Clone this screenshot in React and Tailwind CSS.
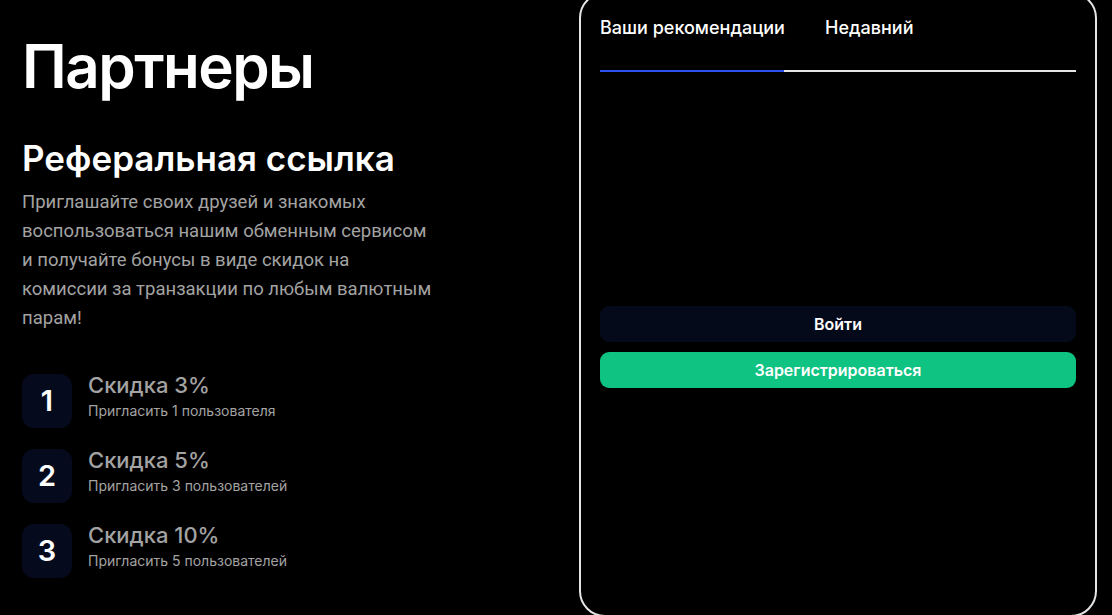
import React from "react";

const tiers = [
  { n: "1", title: "Скидка 3%", sub: "Пригласить 1 пользователя" },
  { n: "2", title: "Скидка 5%", sub: "Пригласить 3 пользователей" },
  { n: "3", title: "Скидка 10%", sub: "Пригласить 5 пользователей" },
];

const App = () => {
  return (
    <div className="min-h-screen h-[615px] overflow-hidden bg-black text-white flex font-['Inter',sans-serif]">
      <div className="w-[579px] shrink-0 pl-[22px] pt-[30px]">
        <h1 className="text-[60px] leading-[72px] font-semibold tracking-[-1.5px]">Партнеры</h1>
        <h2 className="mt-[36px] text-[35px] leading-[40px] font-semibold">Реферальная ссылка</h2>
        <p className="mt-[10px] w-[414px] text-[18.5px] leading-[29px] text-[#a3a3a3] font-['Roboto',sans-serif]">
          Приглашайте своих друзей и знакомых воспользоваться нашим обменным сервисом и получайте бонусы в виде скидок на
          комиссии за транзакции по любым валютным парам!
        </p>
        <div className="mt-[41px] flex flex-col gap-[21px]">
          {tiers.map((t) => (
            <div key={t.n} className="flex items-start gap-[16px]">
              <div className="w-[50px] h-[54px] rounded-[12px] bg-[#050b1c] flex items-center justify-center text-[29px] font-semibold">
                {t.n}
              </div>
              <div className="flex flex-col">
                <span className="text-[22px] leading-[22px] font-medium text-[#a3a3a3]">{t.title}</span>
                <span className="mt-[6px] text-[14px] leading-[17px] text-[#a3a3a3]">{t.sub}</span>
              </div>
            </div>
          ))}
        </div>
      </div>
      <div className="w-[518px] h-[625px] mt-[-8px] shrink-0 rounded-[26px] border-2 border-[#e5e5e5] px-[19px]">
        <div className="flex border-b-2 border-[#e5e5e5] pt-[22px]">
          <button className="w-[184px] -mb-[2px] border-b-2 border-[#2d4ff0] pb-[30px] text-left text-[18px] leading-[24px] font-medium whitespace-nowrap">
            Ваши рекомендации
          </button>
          <button className="ml-[41px] pb-[30px] text-left text-[18px] leading-[24px] font-medium">Недавний</button>
        </div>
        <div className="h-[234px]"></div>
        <button className="w-full h-[36px] rounded-[9px] bg-[#050a1a] text-[16px] font-semibold">Войти</button>
        <button className="mt-[10px] w-full h-[36px] rounded-[9px] bg-[#0fc383] text-[16px] font-semibold">Зарегистрироваться</button>
      </div>
    </div>
  );
};

export default App;
